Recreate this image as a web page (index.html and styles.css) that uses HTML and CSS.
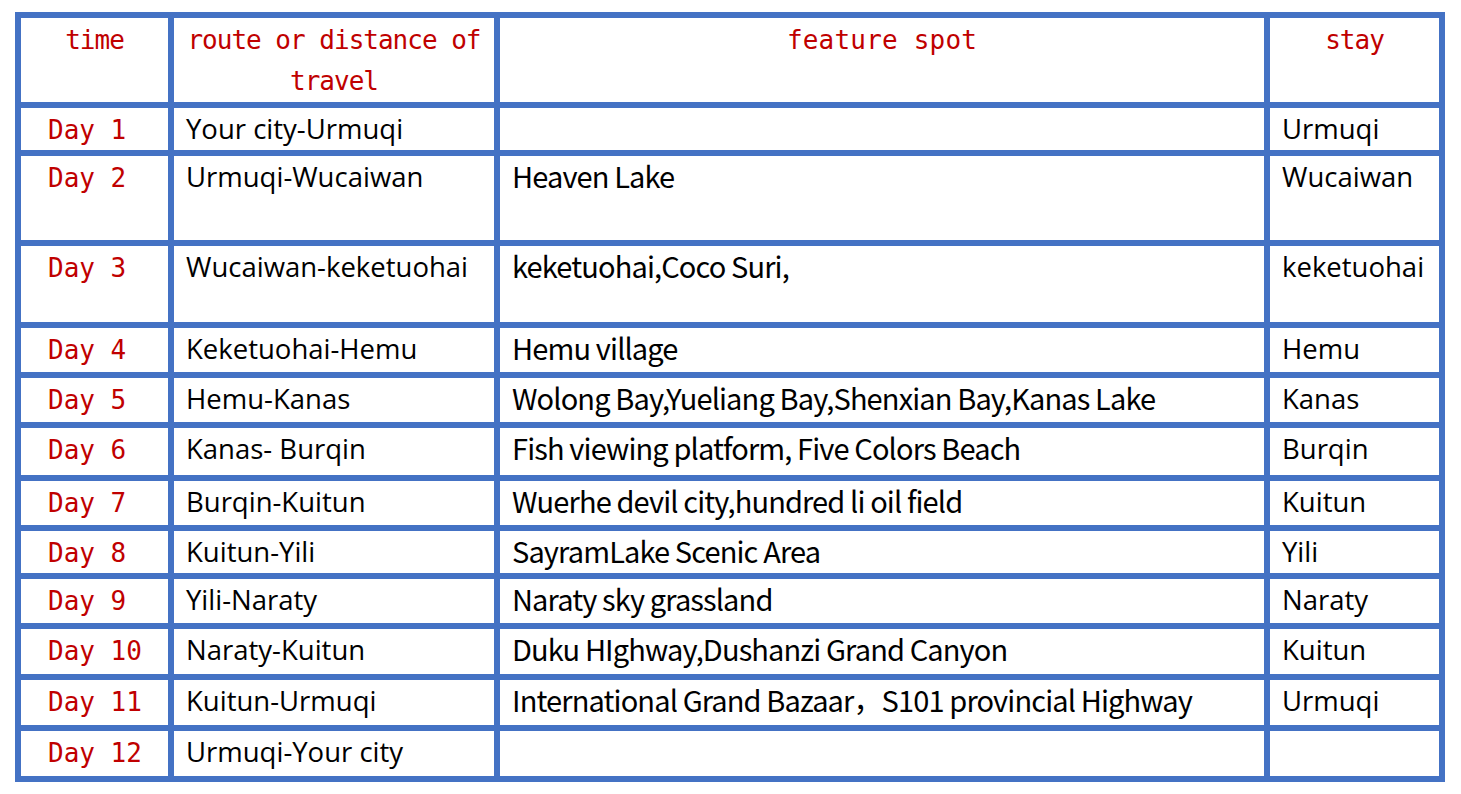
FILE: index.html
```html
<!DOCTYPE html>
<html lang="en">
<head>
<meta charset="utf-8">
<title>Xinjiang itinerary</title>
<link rel="stylesheet" href="styles.css">
</head>
<body>
<table class="plan">
  <thead>
    <tr class="r-head">
      <th class="c-time">time</th>
      <th class="c-route">route or distance of travel</th>
      <th class="c-spot">feature spot</th>
      <th class="c-stay">stay</th>
    </tr>
  </thead>
  <tbody>
    <tr class="r48"><td class="day">Day 1</td><td class="route">Your city-Urmuqi</td><td class="spot"></td><td class="stay">Urmuqi</td></tr>
    <tr class="r90"><td class="day">Day 2</td><td class="route">Urmuqi-Wucaiwan</td><td class="spot">Heaven Lake</td><td class="stay">Wucaiwan</td></tr>
    <tr class="r82"><td class="day">Day 3</td><td class="route">Wucaiwan-keketuohai</td><td class="spot">keketuohai,Coco Suri,</td><td class="stay">keketuohai</td></tr>
    <tr class="r50"><td class="day">Day 4</td><td class="route">Keketuohai-Hemu</td><td class="spot">Hemu village</td><td class="stay">Hemu</td></tr>
    <tr class="r50"><td class="day">Day 5</td><td class="route">Hemu-Kanas</td><td class="spot">Wolong Bay,Yueliang Bay,Shenxian Bay,Kanas Lake</td><td class="stay">Kanas</td></tr>
    <tr class="r53"><td class="day">Day 6</td><td class="route">Kanas- Burqin</td><td class="spot">Fish viewing platform, Five Colors Beach</td><td class="stay">Burqin</td></tr>
    <tr class="r50"><td class="day">Day 7</td><td class="route">Burqin-Kuitun</td><td class="spot">Wuerhe devil city,hundred li oil field</td><td class="stay">Kuitun</td></tr>
    <tr class="r48"><td class="day">Day 8</td><td class="route">Kuitun-Yili</td><td class="spot">SayramLake Scenic Area</td><td class="stay">Yili</td></tr>
    <tr class="r50"><td class="day">Day 9</td><td class="route">Yili-Naraty</td><td class="spot">Naraty sky grassland</td><td class="stay">Naraty</td></tr>
    <tr class="r51"><td class="day">Day 10</td><td class="route">Naraty-Kuitun</td><td class="spot">Duku HIghway,Dushanzi Grand Canyon</td><td class="stay">Kuitun</td></tr>
    <tr class="r51"><td class="day">Day 11</td><td class="route">Kuitun-Urmuqi</td><td class="spot">International Grand Bazaar，S101 provincial Highway</td><td class="stay">Urmuqi</td></tr>
    <tr class="r51"><td class="day">Day 12</td><td class="route">Urmuqi-Your city</td><td class="spot"></td><td class="stay"></td></tr>
  </tbody>
</table>
</body>
</html>
```
FILE: styles.css
```css
html, body {
  margin: 0;
  padding: 0;
  background: #ffffff;
}

.plan {
  margin: 12px 0 0 15px;
  border-collapse: separate;
  border-spacing: 0;
  table-layout: fixed;
  width: 1430px;
  border-top: 6px solid #4472c4;
  border-left: 6px solid #4472c4;
}

.plan th,
.plan td {
  box-sizing: border-box;
  border-right: 6px solid #4472c4;
  border-bottom: 6px solid #4472c4;
  vertical-align: top;
  padding: 0;
}

.c-time { width: 153px; }
.c-route { width: 326px; }
.c-spot { width: 770px; }
.c-stay { width: 175px; }

.plan th {
  font-family: "DejaVu Sans Mono", monospace;
  font-weight: normal;
  font-size: 26px;
  letter-spacing: -1px;
  line-height: 41px;
  color: #c00000;
  text-align: center;
  padding: 2px 4px 0;
  height: 90px;
}

.plan th.c-spot {
  letter-spacing: 0.2px;
}

.plan td {
  font-family: "Open Sans", sans-serif;
  font-size: 27.5px;
  line-height: 32px;
  color: #000000;
  padding: 5px 6px 0 12px;
  white-space: nowrap;
}

.plan td.day {
  font-family: "DejaVu Sans Mono", monospace;
  font-size: 26px;
  letter-spacing: 0;
  color: #c00000;
  padding-top: 6px;
  padding-left: 27px;
}

.plan td.spot {
  font-family: "Noto Sans CJK SC", "Noto Sans", sans-serif;
  font-size: 29px;
  letter-spacing: -0.87px;
  padding-top: 3px;
}

.r48 td { height: 48px; }
.r50 td { height: 50px; }
.r51 td { height: 51px; }
.r53 td { height: 53px; }
.r82 td { height: 82px; }
.r90 td { height: 90px; }
```
